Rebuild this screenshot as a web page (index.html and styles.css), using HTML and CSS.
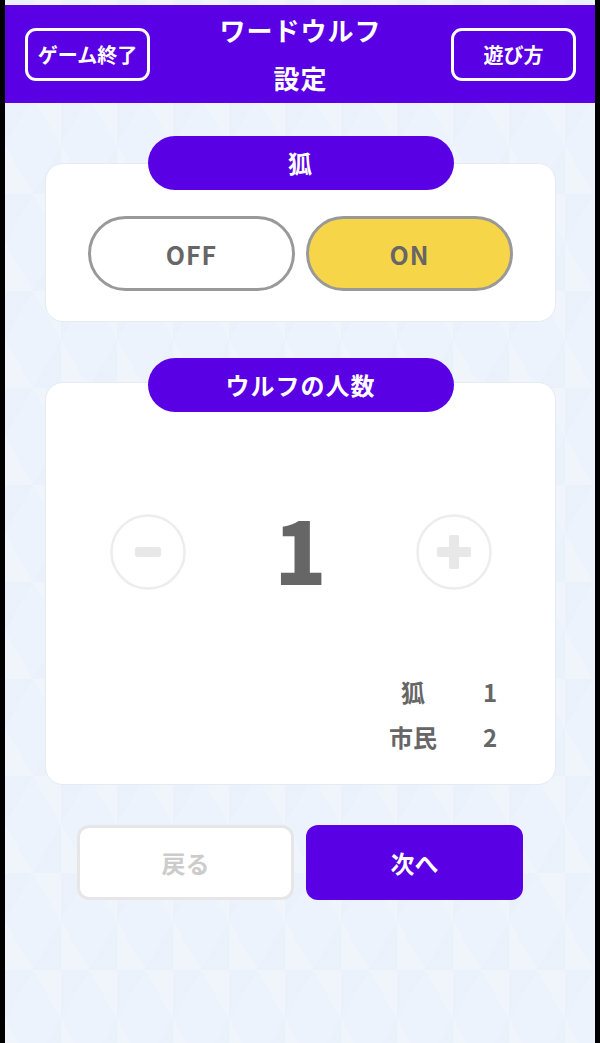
FILE: index.html
```html
<!DOCTYPE html>
<html lang="ja">
<head>
    <meta charset="UTF-8">
    <meta name="viewport" content="width=device-width, initial-scale=1.0">
    <title>ワードウルフ 設定</title>
    <link rel="stylesheet" href="styles.css">
</head>
<body>
    <div class="screen">
        <header class="header">
            <button class="header_btn">ゲーム終了</button>
            <h1 class="title">ワードウルフ<br>設定</h1>
            <button class="header_btn">遊び方</button>
        </header>

        <section class="section">
            <div class="pill">狐</div>
            <div class="card">
                <div class="toggle">
                    <button class="toggle_btn">OFF</button>
                    <button class="toggle_btn active">ON</button>
                </div>
            </div>
        </section>

        <section class="section second">
            <div class="pill">ウルフの人数</div>
            <div class="card card_count">
                <div class="counter">
                    <button class="round_btn">
                        <svg width="76" height="76" viewBox="0 0 76 76">
                            <circle cx="38" cy="38" r="36.5" fill="none" stroke="#ededed" stroke-width="2.5"/>
                            <rect x="25" y="33" width="26" height="10" rx="2.5" fill="#e8e8e8"/>
                        </svg>
                    </button>
                    <span class="count">1</span>
                    <button class="round_btn">
                        <svg width="76" height="76" viewBox="0 0 76 76">
                            <circle cx="38" cy="38" r="36.5" fill="none" stroke="#ededed" stroke-width="2.5"/>
                            <rect x="21" y="33" width="34" height="10" rx="2" fill="#e8e8e8"/>
                            <rect x="33" y="21" width="10" height="34" rx="2" fill="#e8e8e8"/>
                        </svg>
                    </button>
                </div>
                <div class="summary">
                    <span>狐</span><span>1</span>
                    <span>市民</span><span>2</span>
                </div>
            </div>
        </section>

        <div class="nav">
            <button class="nav_btn back">戻る</button>
            <button class="nav_btn next">次へ</button>
        </div>
    </div>
</body>
</html>
```

FILE: styles.css
```css
html, body {
    margin: 0;
    padding: 0;
    background: #000;
    font-family: "Noto Sans CJK JP", "Noto Sans", sans-serif;
}
button {
    font-family: inherit;
    cursor: pointer;
}
.screen {
    width: 590px;
    min-height: 1043px;
    margin: 0 auto;
    padding-top: 5px;
    box-sizing: border-box;
    background-color: #edf3fc;
    background-image:
        linear-gradient(60deg, rgba(255,255,255,0.15) 25%, transparent 25%, transparent 75%, rgba(255,255,255,0.15) 75%),
        linear-gradient(-60deg, rgba(225,233,247,0.12) 25%, transparent 25%, transparent 75%, rgba(225,233,247,0.12) 75%);
    background-size: 56px 97px;
}
.header {
    display: grid;
    grid-template-columns: 1fr auto 1fr;
    align-items: center;
    height: 98px;
    padding: 0 19px 0 20px;
    box-sizing: border-box;
    background: #5a00e4;
}
.header_btn {
    width: 125px;
    height: 53px;
    border: 3px solid #fff;
    border-radius: 11px;
    background: transparent;
    color: #fff;
    font-size: 20px;
    font-weight: bold;
    padding: 0;
}
.header_btn:last-child {
    justify-self: end;
}
.title {
    margin: 0;
    color: #fff;
    font-size: 26px;
    font-weight: bold;
    line-height: 48px;
    text-align: center;
    letter-spacing: 1px;
}
.section {
    margin: 33px 39px 0 40px;
}
.section.second {
    margin-top: 36px;
}
.pill {
    position: relative;
    z-index: 1;
    width: 306px;
    height: 54px;
    margin: 0 auto;
    border-radius: 27px;
    background: #5a00e4;
    color: #fff;
    font-size: 24px;
    font-weight: bold;
    line-height: 54px;
    text-align: center;
    letter-spacing: 1px;
}
.card {
    margin-top: -27px;
    padding: 27px 0 30px;
    background: #fff;
    border: 1px solid #e6eaf2;
    border-radius: 18px;
}
.toggle {
    display: flex;
    justify-content: center;
    gap: 11px;
    margin-top: 25px;
}
.toggle_btn {
    width: 207px;
    height: 75px;
    border: 3px solid #999;
    border-radius: 38px;
    background: #fff;
    color: #666;
    font-size: 25px;
    font-weight: bold;
    letter-spacing: 1px;
}
.toggle_btn.active {
    background: #f7d548;
}
.card_count {
    margin-top: -30px;
    padding: 30px 0 25px;
}
.counter {
    display: grid;
    grid-template-columns: 76px 1fr 76px;
    align-items: center;
    width: 382px;
    margin: 101px auto 0;
}
.round_btn {
    width: 76px;
    height: 76px;
    padding: 0;
    border: none;
    background: none;
}
.round_btn svg {
    display: block;
}
.count {
    margin-top: -8px;
    color: #666;
    font-size: 86px;
    font-weight: 900;
    line-height: 76px;
    text-align: center;
}
.summary {
    display: grid;
    grid-template-columns: 60px 30px;
    column-gap: 32px;
    justify-content: end;
    margin: 79px 50px 0 0;
    color: #666;
    font-size: 24px;
    font-weight: bold;
    line-height: 45px;
    text-align: center;
}
.nav {
    display: flex;
    justify-content: center;
    gap: 12px;
    margin-top: 40px;
}
.nav_btn {
    width: 217px;
    height: 75px;
    border-radius: 12px;
    font-size: 24px;
    font-weight: bold;
}
.nav_btn.back {
    border: 3px solid #e6e6e6;
    background: #fff;
    color: #ccc;
}
.nav_btn.next {
    border: none;
    background: #5a00e4;
    color: #fff;
}
```
